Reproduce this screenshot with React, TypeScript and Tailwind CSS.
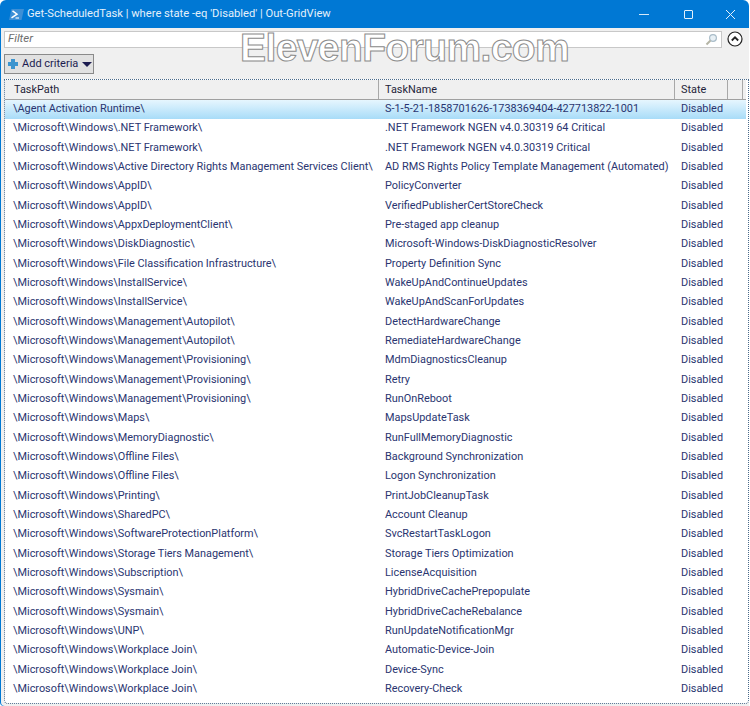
const rows = [
  ["\\Agent Activation Runtime\\", "S-1-5-21-1858701626-1738369404-427713822-1001"],
  ["\\Microsoft\\Windows\\.NET Framework\\", ".NET Framework NGEN v4.0.30319 64 Critical"],
  ["\\Microsoft\\Windows\\.NET Framework\\", ".NET Framework NGEN v4.0.30319 Critical"],
  ["\\Microsoft\\Windows\\Active Directory Rights Management Services Client\\", "AD RMS Rights Policy Template Management (Automated)"],
  ["\\Microsoft\\Windows\\AppID\\", "PolicyConverter"],
  ["\\Microsoft\\Windows\\AppID\\", "VerifiedPublisherCertStoreCheck"],
  ["\\Microsoft\\Windows\\AppxDeploymentClient\\", "Pre-staged app cleanup"],
  ["\\Microsoft\\Windows\\DiskDiagnostic\\", "Microsoft-Windows-DiskDiagnosticResolver"],
  ["\\Microsoft\\Windows\\File Classification Infrastructure\\", "Property Definition Sync"],
  ["\\Microsoft\\Windows\\InstallService\\", "WakeUpAndContinueUpdates"],
  ["\\Microsoft\\Windows\\InstallService\\", "WakeUpAndScanForUpdates"],
  ["\\Microsoft\\Windows\\Management\\Autopilot\\", "DetectHardwareChange"],
  ["\\Microsoft\\Windows\\Management\\Autopilot\\", "RemediateHardwareChange"],
  ["\\Microsoft\\Windows\\Management\\Provisioning\\", "MdmDiagnosticsCleanup"],
  ["\\Microsoft\\Windows\\Management\\Provisioning\\", "Retry"],
  ["\\Microsoft\\Windows\\Management\\Provisioning\\", "RunOnReboot"],
  ["\\Microsoft\\Windows\\Maps\\", "MapsUpdateTask"],
  ["\\Microsoft\\Windows\\MemoryDiagnostic\\", "RunFullMemoryDiagnostic"],
  ["\\Microsoft\\Windows\\Offline Files\\", "Background Synchronization"],
  ["\\Microsoft\\Windows\\Offline Files\\", "Logon Synchronization"],
  ["\\Microsoft\\Windows\\Printing\\", "PrintJobCleanupTask"],
  ["\\Microsoft\\Windows\\SharedPC\\", "Account Cleanup"],
  ["\\Microsoft\\Windows\\SoftwareProtectionPlatform\\", "SvcRestartTaskLogon"],
  ["\\Microsoft\\Windows\\Storage Tiers Management\\", "Storage Tiers Optimization"],
  ["\\Microsoft\\Windows\\Subscription\\", "LicenseAcquisition"],
  ["\\Microsoft\\Windows\\Sysmain\\", "HybridDriveCachePrepopulate"],
  ["\\Microsoft\\Windows\\Sysmain\\", "HybridDriveCacheRebalance"],
  ["\\Microsoft\\Windows\\UNP\\", "RunUpdateNotificationMgr"],
  ["\\Microsoft\\Windows\\Workplace Join\\", "Automatic-Device-Join"],
  ["\\Microsoft\\Windows\\Workplace Join\\", "Device-Sync"],
  ["\\Microsoft\\Windows\\Workplace Join\\", "Recovery-Check"],
]

function PsIcon() {
  return (
    <svg className="shrink-0" width="15" height="11" viewBox="0 0 15 11">
      <path d="M2.5 0H15l-2.5 11H0z" fill="#3d8fd6" />
      <path d="M3.5 1.8L8 5.2 2.5 8.8" fill="none" stroke="#fff" strokeWidth="1.5" />
      <path d="M6.5 9h3.5" stroke="#fff" strokeWidth="1.1" />
    </svg>
  )
}

export default function App() {
  return (
    <div className="relative h-[706px] w-[750px] overflow-hidden bg-white font-['Roboto',sans-serif] text-[10.9px]">
      <div className="flex h-full w-[749px] flex-col rounded-t-[6px] rounded-b-[4px] bg-[#0078d4] pl-px">
        {/* title bar */}
        <div className="flex h-[28px] shrink-0 items-center pl-[8px] text-[#e4f0fb]">
          <PsIcon />
          <span className="ml-[3px] text-[11.2px]">Get-ScheduledTask | where state -eq 'Disabled' | Out-GridView</span>
          <div className="ml-auto flex items-center">
            <span className="h-px w-[10px] bg-[#d5e8f8]" />
            <span className="ml-[35px] h-[9px] w-[9px] rounded-[1px] border border-[#e4f0fb]" />
            <svg className="ml-[32px] mr-[13px]" width="11" height="11" viewBox="0 0 11 11">
              <path d="M1 1l9 9M10 1l-9 9" stroke="#e4f0fb" strokeWidth="1" />
            </svg>
          </div>
        </div>

        <div className="flex min-h-0 flex-1 flex-col rounded-bl-[4px] bg-[#f0f0f0] pb-[2px] pl-[3px]">
          {/* filter */}
          <div className="flex h-[20px] shrink-0 items-center gap-[5px] pt-[2px]">
            <div className="flex h-[17px] flex-1 items-center justify-between border border-[#c8c8c8] bg-white pl-[3px] pr-[3px]">
              <span className="text-[11.5px] italic text-[#6d6d6d]">Filter</span>
              <svg width="13" height="13" viewBox="0 0 13 13">
                <circle cx="8" cy="5" r="3.4" fill="#e8f0f5" stroke="#a9bcc8" strokeWidth="1.2" />
                <path d="M5.5 7.5L1.5 11.5" stroke="#b5b5a5" strokeWidth="2" />
              </svg>
            </div>
            <svg className="mr-[6px]" width="16" height="16" viewBox="0 0 16 16">
              <circle cx="8" cy="8" r="7" fill="#fff" stroke="#222" strokeWidth="1.2" />
              <path d="M4.8 9.5L8 6.3l3.2 3.2" fill="none" stroke="#222" strokeWidth="1.8" />
            </svg>
          </div>

          {/* add criteria */}
          <div className="flex shrink-0 pt-[6px]">
            <button className="flex h-[20px] w-[90px] items-center whitespace-nowrap border border-[#8a8a8a] bg-[#e1e1e1] pl-[2px] text-[11px] text-[#1c1c50]">
              <svg className="shrink-0" width="12" height="12" viewBox="0 0 12 12">
                <path d="M4 1h4v3h3v4H8v3H4V8H1V4h3z" fill="#3d95cf" />
              </svg>
              <span className="ml-[3px]">Add criteria</span>
              <span className="ml-[4px] h-0 w-0 shrink-0 border-x-[5px] border-t-[5px] border-x-transparent border-t-[#1c1c50]" />
            </button>
          </div>

          {/* grid */}
          <div className="mt-[5px] min-h-0 flex-1 rounded-bl-[4px] rounded-br-[4px] border border-dotted border-[#4a6a8a] bg-white pr-[2px]">
            <div className="flex h-[19.5px] border-b border-[#a0a0a0] bg-[#f0f0f0] text-[#1f1f3a]">
              <div className="w-[374px] border-r border-[#a8a8a8] pl-[9px] leading-[19px]">TaskPath</div>
              <div className="w-[296px] border-r border-[#a8a8a8] pl-[6px] leading-[19px]">TaskName</div>
              <div className="w-[53px] border-r border-[#a8a8a8] pl-[6px] leading-[19px]">State</div>
              <div className="w-[15px] border-r border-[#a8a8a8]" />
            </div>
            {rows.map((r, i) => (
              <div
                key={i}
                className={
                  i === 0
                    ? "flex h-[19.33px] items-center bg-gradient-to-b from-[#e6f6fe] to-[#a8dcf8] text-[#2a3570]"
                    : "flex h-[19.33px] items-center text-[#2a3570]"
                }
              >
                <div className="w-[374px] whitespace-nowrap pl-[8px]">{r[0]}</div>
                <div className="w-[296px] whitespace-nowrap pl-[6px]">{r[1]}</div>
                <div className="pl-[6px]">Disabled</div>
              </div>
            ))}
          </div>
        </div>
      </div>

      {/* site watermark */}
      <div className="absolute left-[240px] top-[24px] whitespace-nowrap font-['Liberation_Sans',sans-serif] text-[39px] font-bold leading-[48px] tracking-[-0.6px] text-white [-webkit-text-stroke:1px_#8c8c8c]">
        ElevenForum.com
      </div>
    </div>
  )
}
